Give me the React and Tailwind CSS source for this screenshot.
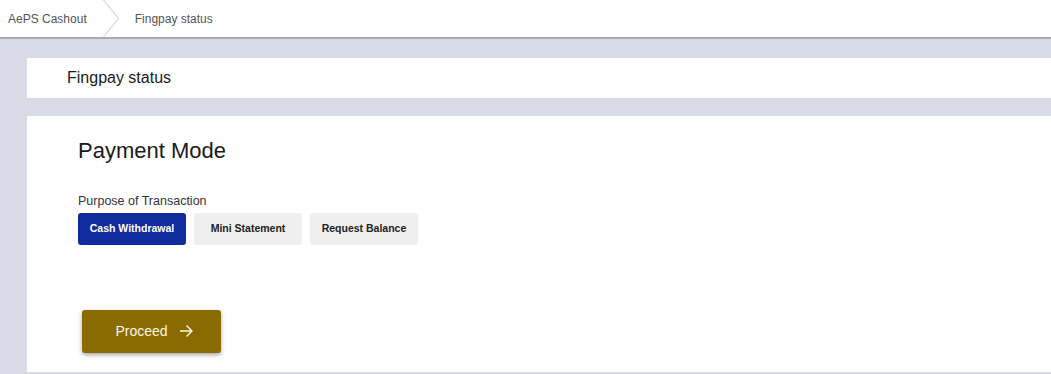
import React, { useState } from "react";

const modes = ["Cash Withdrawal", "Mini Statement", "Request Balance"];

export default function App() {
  const [mode, setMode] = useState("Cash Withdrawal");
  return (
    <div className="w-[1051px] h-[374px] overflow-hidden bg-[#d8dbe5] font-['Liberation_Sans',Arial,sans-serif]">
      {/* breadcrumb */}
      <div className="h-[39px] bg-white border-b-2 border-[#a9abb3] flex items-stretch text-[12px] text-[#555]">
        <div className="pl-2 pr-[15px] flex items-center">AePS Cashout</div>
        <svg width="18" height="37" viewBox="0 0 18 37" className="shrink-0">
          <path d="M1.5 0 L16.5 18.5 L1.5 37" fill="none" stroke="#c8c8c8" strokeWidth="1" />
        </svg>
        <div className="pl-[15px] flex items-center">Fingpay status</div>
      </div>

      <div className="pl-[27px] pt-[19px] flex flex-col gap-[18px]">
        <div className="h-[40px] bg-white flex items-center pl-10 text-[16px] text-[#1a1a1a]">
          Fingpay status
        </div>

        <div className="h-[256px] bg-white pl-[51px] pt-6">
          <h2 className="text-[22px] text-[#1a1a1a] leading-none">Payment Mode</h2>
          <p className="mt-[33px] text-[12.5px] text-[#333] leading-none">Purpose of Transaction</p>
          <div className="mt-[5px] flex gap-2">
            {modes.map((m) => (
              <button
                key={m}
                onClick={() => setMode(m)}
                className={
                  mode === m
                    ? "h-8 w-[108px] rounded-[3px] bg-[#102b9e] text-white text-[10.5px] font-bold"
                    : "h-8 w-[108px] rounded-[3px] bg-[#efefef] text-[#222] text-[10.5px] font-bold"
                }
              >
                {m}
              </button>
            ))}
          </div>
          <button className="mt-[65px] ml-1 h-[43px] w-[139px] pl-[6px] rounded-[3px] bg-[#8a6b00] text-[#fff8e6] text-[14px] flex items-center justify-center gap-[10px] shadow-[0_2px_4px_rgba(0,0,0,0.35)]">
            Proceed
            <svg width="16" height="16" viewBox="0 0 16 16" fill="none" stroke="currentColor" strokeWidth="1.4">
              <path d="M2 8 H14 M8.5 2.5 L14 8 L8.5 13.5" />
            </svg>
          </button>
        </div>
      </div>
    </div>
  );
}
